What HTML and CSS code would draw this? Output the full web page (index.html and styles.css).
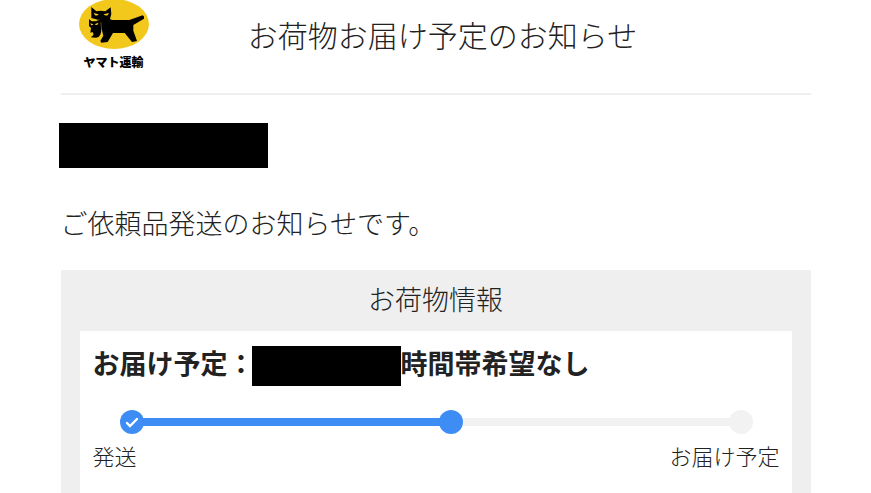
FILE: index.html
```html
<!DOCTYPE html>
<html lang="ja">
<head>
    <meta charset="UTF-8">
    <meta name="viewport" content="width=device-width, initial-scale=1.0">
    <title>お荷物お届け予定のお知らせ</title>
    <link rel="stylesheet" href="styles.css">
</head>
<body>
    <div class="mail">

        <!-- Header -->
        <header>
            <div class="logo">
                <svg viewBox="0 0 228 150" aria-hidden="true">
                    <ellipse cx="114" cy="72" rx="105" ry="75" fill="#f3c81d"/>
                    <!-- parent cat -->
                    <path d="M46 21 L61 34 Q75 31 88 34 L104 22 L106 42 L102 57 L108 60 L160 60 L200 46 Q206 48 204 56 L172 75 L172 92 L183 123 L168 126 L146 99 L111 99 L95 126 L76 128 L73 123 L82 107 L76 83 L72 62 L60 58 L46 54 Z" fill="#000"/>
                    <path d="M53 39 L68 43 Q65 48 57 46 Z M99 39 L83 43 Q87 48 95 46 Z" fill="#f3c81d"/>
                    <!-- kitten -->
                    <path d="M39 57 L47 64 L61 63 L73 57 L76 84 Q77 112 60 113 L44 112 Q58 105 49 96 L43 98 L45 84 L39 78 Z" fill="#000"/>
                    <path d="M43 70 L52 73 Q49 77 45 75 Z M67 68 L56 73 Q61 77 66 73 Z" fill="#f3c81d"/>
                    <path d="M48 62 L60 63 L71 58 M75 67 L76 83" fill="none" stroke="#f3c81d" stroke-width="1"/>
                </svg>
                <span>ヤマト運輸</span>
            </div>
            <h1>お荷物お届け予定のお知らせ</h1>
        </header>

        <!-- Greeting -->
        <div class="masked name"></div>
        <p class="message">ご依頼品発送のお知らせです。</p>

        <!-- Parcel info -->
        <section class="info">
            <h2>お荷物情報</h2>
            <div class="card">
                <p class="schedule">お届け予定：<span class="masked date"></span>時間帯希望なし</p>
                <div class="progress">
                    <span class="dot done">
                        <svg viewBox="0 0 24 24" aria-hidden="true">
                            <path d="M7 13 L10 16 L17 9" fill="none" stroke="#fff" stroke-width="2.4" stroke-linecap="round"/>
                        </svg>
                    </span>
                    <span class="bar done"></span>
                    <span class="dot done"></span>
                    <span class="bar"></span>
                    <span class="dot"></span>
                </div>
                <div class="labels">
                    <span>発送</span>
                    <span>お届け予定</span>
                </div>
            </div>
        </section>

    </div>
</body>
</html>
```
FILE: styles.css
```css
* {
    box-sizing: border-box;
}
body {
    font-family: "Noto Sans CJK JP", sans-serif;
    font-weight: 300;
    font-size: 27px;
    line-height: 40px;
    color: #222;
    background-color: #fff;
    margin: 0;
}
.mail {
    max-width: 750px;
    margin: 0 auto;
}
header {
    display: grid;
    grid-template-columns: 106px 1fr 92px;
    border-bottom: 2px solid #efefef;
    padding-bottom: 20px;
}
.logo {
    display: flex;
    flex-direction: column;
    align-items: center;
    font-size: 12px;
    font-weight: 900;
    line-height: 23px;
    color: #000;
}
.logo svg {
    width: 76px;
    height: 50px;
}
h1 {
    margin: 14px 0 0;
    font-size: 30px;
    font-weight: 300;
    line-height: 40px;
    text-align: center;
}
.masked {
    background-color: #000;
}
.name {
    width: 209px;
    height: 45px;
    margin: 28px 0 0 -2px;
}
.message {
    margin: 35px 0 27px;
}
.info {
    background-color: #efefef;
    padding: 9px 19px 0;
}
h2 {
    margin: 0 0 12px;
    font-size: 27px;
    font-weight: 300;
    line-height: 40px;
    text-align: center;
}
.card {
    background-color: #fff;
    padding: 15px 12px 20px 13px;
}
.schedule {
    display: flex;
    flex-wrap: wrap;
    margin: 0;
    font-weight: 700;
    line-height: 34px;
}
.date {
    width: 149px;
    height: 40px;
    margin-left: -3px;
}
.progress {
    display: flex;
    align-items: center;
    margin: 24px 27px 1px;
}
.dot {
    position: relative;
    width: 24px;
    height: 24px;
    border-radius: 50%;
    background-color: #f2f2f2;
}
.dot svg {
    display: block;
}
.bar {
    flex: 266;
    height: 8px;
    margin: 0 -2px;
    background-color: #f2f2f2;
}
.bar.done {
    flex: 296;
}
.done,
.bar.done {
    background-color: #3d8df5;
}
.labels {
    display: flex;
    justify-content: space-between;
    font-size: 22px;
}
```
